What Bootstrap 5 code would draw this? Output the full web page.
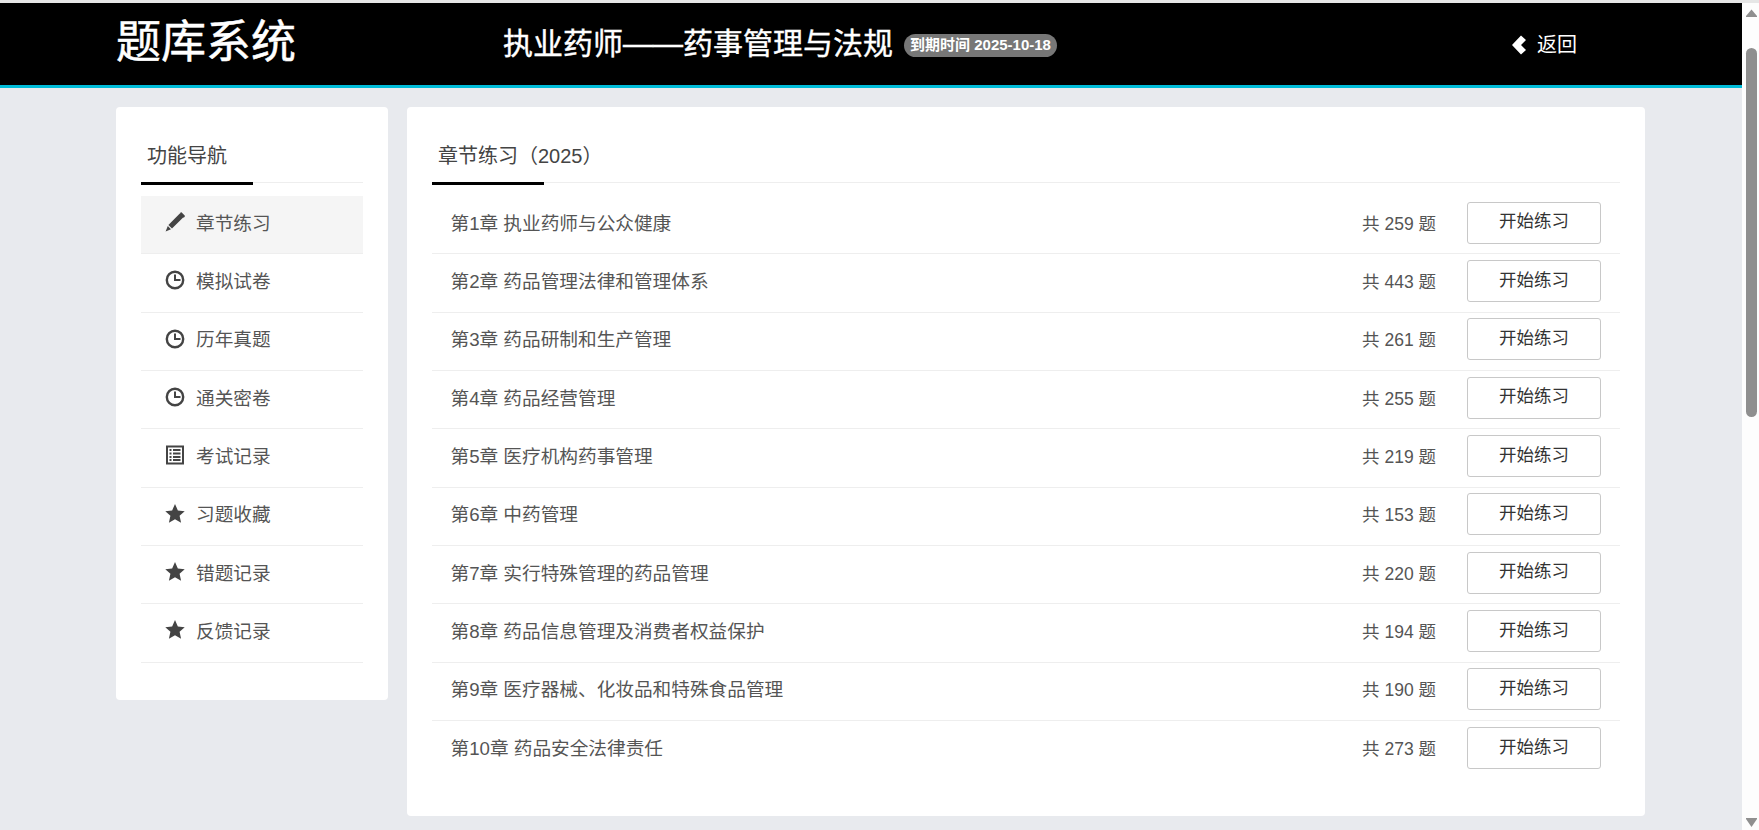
<!DOCTYPE html>
<html lang="zh-CN">
<head>
<meta charset="utf-8">
<title>题库系统</title>
<link rel="stylesheet" href="https://cdn.jsdelivr.net/npm/bootstrap@5.3.0/dist/css/bootstrap.min.css">
<style>
html, body { height: 830px; overflow: hidden; }
body { background: #e8eaee; color: #555; font-family: "Liberation Sans", Arial, "Noto Sans CJK SC", sans-serif; font-size: 16px; }
.app-shell { height: 830px; border-top: 3px solid #e6e6e6; }
.page-pane { width: 1742px; flex: none; }
.top-head { height: 85px; background: #000; border-bottom: 3px solid #00bcd9; color: #fff; padding-left: 116px; }
.brand-name { width: 387px; font-size: 45px; line-height: 1; font-weight: 400; -webkit-text-stroke: .5px #fff; margin-top: -4px; }
.course-name { font-size: 30px; line-height: 1; -webkit-text-stroke: .4px #fff; }
.expire-tag { background: #777; border-radius: 12px; height: 23px; width: 153px; font-size: 15px; font-weight: 700; margin-left: 11px; margin-top: 3px; }
.back-link { color: #fff; font-size: 20px; text-decoration: none; margin-left: 455px; margin-top: 1px; gap: 10px; }
.body-wrap { padding: 19px 0 0 116px; gap: 19px; }
.panel { background: #fff; border-radius: 4px; padding: 0 25px; }
.side-panel { width: 272px; height: 593px; }
.main-panel { width: 1238px; height: 709px; }
.tab-head { height: 76px; border-bottom: 1px solid #eee; position: relative; padding-left: 6px; padding-top: 37px; font-size: 20px; line-height: 24px; color: #444; margin-bottom: 13px; }
.tab-head::after { content: ""; position: absolute; left: 0; bottom: -3px; width: 112px; height: 3px; background: #000; }
.row-item { height: 58.33px; border-bottom: 1px solid #eee; font-size: 18.67px; color: #555; padding-bottom: 2px; }
.row-item.is-current { background: #f5f5f5; }
.row-item.no-line { border-bottom: 0; }
.side-row { padding-left: 24px; gap: 11px; }
.side-glyph { width: 20px; height: 20px; flex: none; fill: #444; margin-top: -3px; }
.list-row { padding-left: 18.5px; padding-right: 19px; }
.list-count { font-size: 17.5px; margin-right: 31px; color: #555; }
.go-btn { width: 134px; height: 42px; margin-top: -2px; background: #fff; border: 1px solid #c8c8c8; border-radius: 3px; font-size: 17.5px; line-height: 1; color: #333; padding: 0 0 1px; }
.fake-bar { width: 17px; flex: none; background: #fdfdfd; height: 827px; }
.bar-arrow { height: 17px; flex: none; }
.bar-gap { height: 28px; }
.bar-thumb { height: 369px; width: 11px; background: #8f8f8f; border-radius: 6px; margin-left: 4px; }
</style>
</head>
<body>
<div class="app-shell d-flex">
  <div class="page-pane">
    <header class="top-head d-flex align-items-center">
      <div class="brand-name">题库系统</div>
      <div class="course-name">执业药师——药事管理与法规</div>
      <span class="expire-tag d-inline-flex align-items-center justify-content-center text-white">到期时间 2025-10-18</span>
      <a class="back-link d-inline-flex align-items-center" href="#">
        <svg width="15" height="20" viewBox="0 0 15 20"><path d="M9 .5 14 5 9 10l5 5-5 4.500L0 10z" fill="#fff"/></svg>
        <span>返回</span>
      </a>
    </header>
    <div class="body-wrap d-flex align-items-start">
      <aside class="panel side-panel">
        <div class="tab-head">功能导航</div>
        <div class="row-item side-row is-current d-flex align-items-center"><svg class="side-glyph" viewBox="0 0 20 20"><path d="M14.800 1.600 18.400 5.200 7 16.600 3.400 13zM15.500 .5l1-.2 3.400 3.400-.2 1-1 1-3.800-3.800zM2.800 14l3.200 3.200L.6 19.400z"/></svg><span>章节练习</span></div>
        <div class="row-item side-row d-flex align-items-center"><svg class="side-glyph" viewBox="0 0 20 20"><circle cx="10" cy="10" r="8.200" fill="none" stroke="#444" stroke-width="2.400"/><path d="M9 4.500h2V9h4.500v2H9z"/></svg><span>模拟试卷</span></div>
        <div class="row-item side-row d-flex align-items-center"><svg class="side-glyph" viewBox="0 0 20 20"><circle cx="10" cy="10" r="8.200" fill="none" stroke="#444" stroke-width="2.400"/><path d="M9 4.500h2V9h4.500v2H9z"/></svg><span>历年真题</span></div>
        <div class="row-item side-row d-flex align-items-center"><svg class="side-glyph" viewBox="0 0 20 20"><circle cx="10" cy="10" r="8.200" fill="none" stroke="#444" stroke-width="2.400"/><path d="M9 4.500h2V9h4.500v2H9z"/></svg><span>通关密卷</span></div>
        <div class="row-item side-row d-flex align-items-center"><svg class="side-glyph" viewBox="0 0 20 20"><path fill-rule="evenodd" d="M1 .5h18v19H1zM3 2.500v15h14v-15zM4.500 4h2v2h-2zM8 4h7.500v2H8zM4.500 7.500h2v2h-2zM8 7.500h7.500v2H8zM4.500 11h2v2h-2zM8 11h7.500v2H8zM4.500 14h2v2h-2zM8 14h7.500v2H8z"/></svg><span>考试记录</span></div>
        <div class="row-item side-row d-flex align-items-center"><svg class="side-glyph" viewBox="-.5 0 21 21"><path d="m10 0 3 6.700 7.200.8-5.400 4.900 1.600 7.200L10 16l-6.400 3.600 1.600-7.200L-.2 7.500 7 6.700z"/></svg><span>习题收藏</span></div>
        <div class="row-item side-row d-flex align-items-center"><svg class="side-glyph" viewBox="-.5 0 21 21"><path d="m10 0 3 6.700 7.200.8-5.400 4.900 1.600 7.200L10 16l-6.400 3.600 1.600-7.200L-.2 7.500 7 6.700z"/></svg><span>错题记录</span></div>
        <div class="row-item side-row d-flex align-items-center"><svg class="side-glyph" viewBox="-.5 0 21 21"><path d="m10 0 3 6.700 7.200.8-5.400 4.900 1.600 7.200L10 16l-6.400 3.600 1.600-7.200L-.2 7.500 7 6.700z"/></svg><span>反馈记录</span></div>
      </aside>
      <main class="panel main-panel">
        <div class="tab-head">章节练习（2025）</div>
        <div class="row-item list-row d-flex align-items-center"><span class="flex-grow-1">第1章 执业药师与公众健康</span><span class="list-count">共 259 题</span><button class="go-btn" type="button">开始练习</button></div>
        <div class="row-item list-row d-flex align-items-center"><span class="flex-grow-1">第2章 药品管理法律和管理体系</span><span class="list-count">共 443 题</span><button class="go-btn" type="button">开始练习</button></div>
        <div class="row-item list-row d-flex align-items-center"><span class="flex-grow-1">第3章 药品研制和生产管理</span><span class="list-count">共 261 题</span><button class="go-btn" type="button">开始练习</button></div>
        <div class="row-item list-row d-flex align-items-center"><span class="flex-grow-1">第4章 药品经营管理</span><span class="list-count">共 255 题</span><button class="go-btn" type="button">开始练习</button></div>
        <div class="row-item list-row d-flex align-items-center"><span class="flex-grow-1">第5章 医疗机构药事管理</span><span class="list-count">共 219 题</span><button class="go-btn" type="button">开始练习</button></div>
        <div class="row-item list-row d-flex align-items-center"><span class="flex-grow-1">第6章 中药管理</span><span class="list-count">共 153 题</span><button class="go-btn" type="button">开始练习</button></div>
        <div class="row-item list-row d-flex align-items-center"><span class="flex-grow-1">第7章 实行特殊管理的药品管理</span><span class="list-count">共 220 题</span><button class="go-btn" type="button">开始练习</button></div>
        <div class="row-item list-row d-flex align-items-center"><span class="flex-grow-1">第8章 药品信息管理及消费者权益保护</span><span class="list-count">共 194 题</span><button class="go-btn" type="button">开始练习</button></div>
        <div class="row-item list-row d-flex align-items-center"><span class="flex-grow-1">第9章 医疗器械、化妆品和特殊食品管理</span><span class="list-count">共 190 题</span><button class="go-btn" type="button">开始练习</button></div>
        <div class="row-item list-row no-line d-flex align-items-center"><span class="flex-grow-1">第10章 药品安全法律责任</span><span class="list-count">共 273 题</span><button class="go-btn" type="button">开始练习</button></div>
      </main>
    </div>
  </div>
  <div class="fake-bar d-flex flex-column">
    <svg class="bar-arrow" viewBox="0 0 17 17"><path d="M9.500 6.500 15 13v1H4v-1z" fill="#8f8f8f"/></svg>
    <div class="bar-gap"></div>
    <div class="bar-thumb"></div>
    <div class="flex-grow-1"></div>
    <svg class="bar-arrow" viewBox="0 0 17 17"><path d="M4 5h11v1l-5.500 8L4 6z" fill="#8f8f8f"/></svg>
  </div>
</div>
<script src="https://cdn.jsdelivr.net/npm/bootstrap@5.3.0/dist/js/bootstrap.bundle.min.js"></script>
</body>
</html>
